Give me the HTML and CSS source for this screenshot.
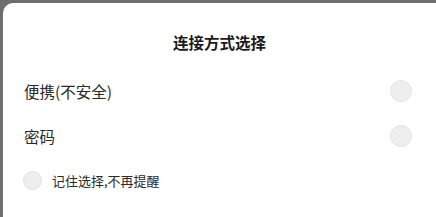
FILE: index.html
```html
<!DOCTYPE html>
<html lang="zh-CN">
<head>
    <meta charset="UTF-8">
    <meta name="viewport" content="width=device-width, initial-scale=1.0">
    <title>连接方式选择</title>
    <link rel="stylesheet" href="styles.css">
</head>
<body>

    <!-- Dialog -->
    <div class="dialog">
        <h2 class="dialog-title">连接方式选择</h2>

        <div class="option-list">
            <label class="option">
                <span class="option-text">便携(不安全)</span>
                <span class="radio"></span>
            </label>
            <label class="option">
                <span class="option-text">密码</span>
                <span class="radio"></span>
            </label>
        </div>

        <label class="remember">
            <span class="check"></span>
            <span class="remember-text">记住选择,不再提醒</span>
        </label>
    </div>

</body>
</html>
```

FILE: styles.css
```css
* {
    box-sizing: border-box;
    margin: 0;
    padding: 0;
    font-family: 'Noto Sans CJK SC', 'Noto Sans', sans-serif;
}

body {
    background: #6e6e6e;
    height: 100vh;
    overflow: hidden;
}

/* Dialog Styles */
.dialog {
    background: white;
    margin: 3px 0 0 3px;
    height: 214px;
    border-radius: 10px 0 0 0;
    padding-top: 28px;
}

.dialog-title {
    height: 22px;
    line-height: 22px;
    text-align: center;
    font-size: 15.5px;
    font-weight: 700;
    color: #1a1a1a;
    margin-bottom: 15px;
}

.option {
    display: flex;
    justify-content: space-between;
    align-items: center;
    height: 45px;
    padding: 0 24px 0 21px;
}

.option-text {
    font-size: 15.5px;
    color: #2a2a2a;
}

.radio {
    width: 22px;
    height: 22px;
    border-radius: 50%;
    background: #eeeeee;
    border: 1px solid #e4e4e4;
}

/* Remember checkbox */
.remember {
    display: flex;
    align-items: center;
    height: 45px;
    padding-left: 20px;
}

.check {
    width: 19px;
    height: 19px;
    border-radius: 50%;
    background: #eeeeee;
    border: 1px solid #e2e2e2;
    margin-right: 10px;
}

.remember-text {
    font-size: 13px;
    color: #2a2a2a;
}
```
